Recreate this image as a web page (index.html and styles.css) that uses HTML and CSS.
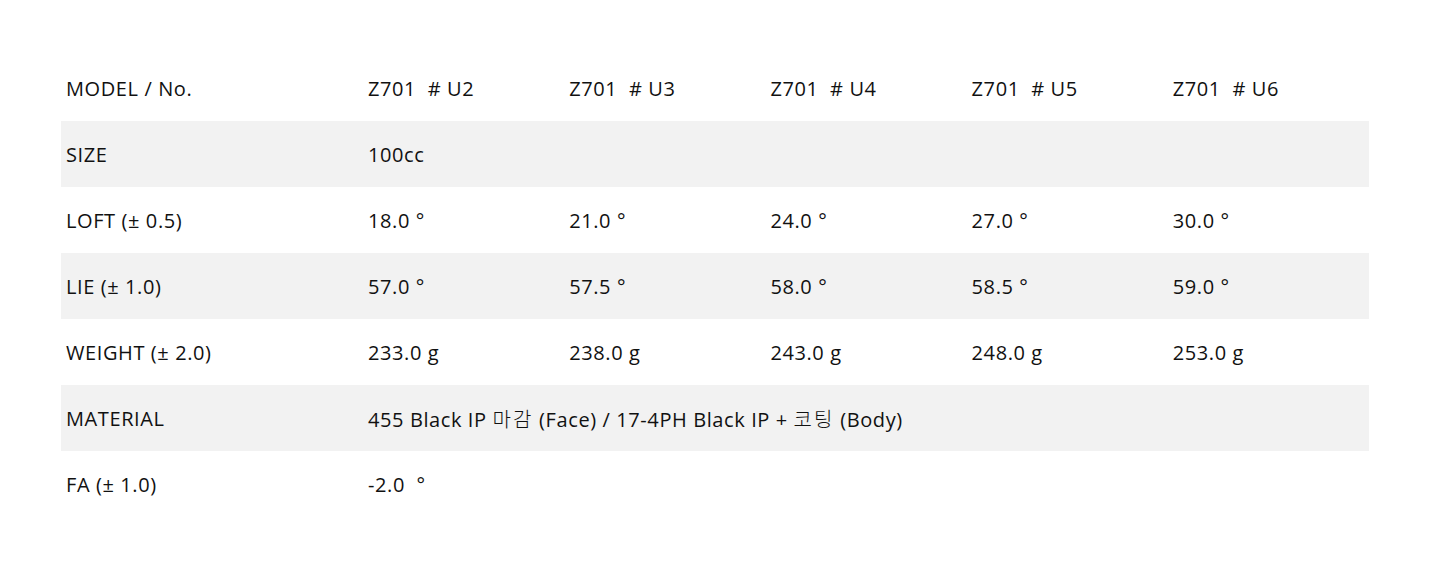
FILE: index.html
```html
<!DOCTYPE html>
<html lang="ko">
<head>
<meta charset="utf-8">
<title>Spec</title>
<link rel="stylesheet" href="styles.css">
</head>
<body>
<div class="wrap">
<table class="spec">
<colgroup><col class="c-label"><col><col><col><col><col></colgroup>
<tbody>
<tr><td>MODEL / No.</td><td>Z701&nbsp;&nbsp;# U2</td><td>Z701&nbsp;&nbsp;# U3</td><td>Z701&nbsp;&nbsp;# U4</td><td>Z701&nbsp;&nbsp;# U5</td><td>Z701&nbsp;&nbsp;# U6</td></tr>
<tr class="alt"><td>SIZE</td><td colspan="5">100cc</td></tr>
<tr><td>LOFT (± 0.5)</td><td>18.0 °</td><td>21.0 °</td><td>24.0 °</td><td>27.0 °</td><td>30.0 °</td></tr>
<tr class="alt"><td>LIE (± 1.0)</td><td>57.0 °</td><td>57.5 °</td><td>58.0 °</td><td>58.5 °</td><td>59.0 °</td></tr>
<tr><td>WEIGHT (± 2.0)</td><td>233.0 g</td><td>238.0 g</td><td>243.0 g</td><td>248.0 g</td><td>253.0 g</td></tr>
<tr class="alt"><td>MATERIAL</td><td colspan="5">455 Black IP <span class="ko">마감</span> (Face) / 17-4PH Black IP + <span class="ko">코팅</span> (Body)</td></tr>
<tr><td>FA (± 1.0)</td><td colspan="5">-2.0&nbsp;&nbsp;°</td></tr>
</tbody>
</table>
</div>
</body>
</html>
```
FILE: styles.css
```css
html, body { margin: 0; padding: 0; background: #fff; }
body {
  font-family: "Open Sans", "Noto Sans CJK KR", sans-serif;
  color: #111;
}
.wrap { padding: 55px 0 0 61px; }
.spec {
  width: 1308px;
  border-collapse: collapse;
  table-layout: fixed;
  font-size: 20px;
  letter-spacing: 0.6px;
}
.c-label { width: 302px; }
.spec td {
  height: 66px;
  padding: 0 0 0 5px;
  vertical-align: middle;
  white-space: nowrap;
  box-sizing: border-box;
}
.spec tr.alt td { background: #f2f2f2; }
.ko { font-family: "Noto Sans CJK KR", sans-serif; font-weight: 300; letter-spacing: 2px; }
```
